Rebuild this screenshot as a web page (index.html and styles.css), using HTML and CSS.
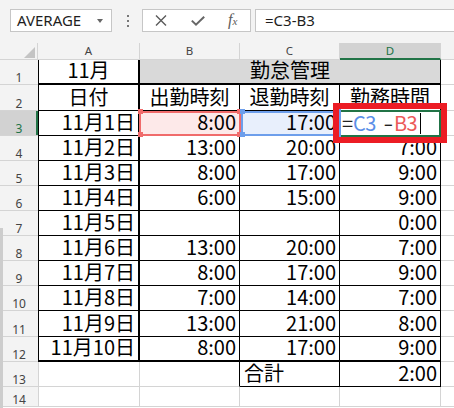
FILE: index.html
```html
<!DOCTYPE html>
<html lang="ja">
<head>
<meta charset="utf-8">
<title>勤怠管理</title>
<link rel="stylesheet" href="styles.css">
</head>
<body>
<div class="app">
  <div class="fbar">
    <div class="namebox"><span class="nbtxt">AVERAGE</span><span class="dd"></span></div>
    <div class="dots"><i></i><i></i><i></i></div>
    <div class="btns">
      <svg class="ico-x" width="12" height="11" viewBox="0 0 12 11"><path d="M1 0.5 L11 10.5 M11 0.5 L1 10.5" stroke="#5a5a5a" stroke-width="1.4" fill="none"/></svg>
      <svg class="ico-ok" width="14" height="10" viewBox="0 0 14 10"><path d="M0.8 4.6 L5 8.6 L13.2 0.8" stroke="#666" stroke-width="2" fill="none"/></svg>
      <span class="fx">f<span class="fxx">x</span></span>
    </div>
    <div class="formula">=C3-B3</div>
  </div>

  <div class="sheet">
    <!-- header -->
    <div class="corner"><span class="tri"></span></div>
    <div class="ch">A</div>
    <div class="ch">B</div>
    <div class="ch">C</div>
    <div class="ch sel">D</div>
    <div class="ch last"></div>

    <!-- row 1 -->
    <div class="rh">1</div>
    <div class="c m ta tt">11月</div>
    <div class="c m k tt title">勤怠管理</div>
    <div class="c e"></div>

    <!-- row 2 -->
    <div class="rh">2</div>
    <div class="c m ta k">日付</div>
    <div class="c m k">出勤時刻</div>
    <div class="c m k">退勤時刻</div>
    <div class="c m k">勤務時間</div>
    <div class="c e"></div>

    <!-- row 3 -->
    <div class="rh sel">3</div>
    <div class="c r ta k">11月1日</div>
    <div class="c r k pink">8:00<span class="sel-box red"><i class="h tl"></i><i class="h tr"></i><i class="h bl"></i><i class="h br"></i></span></div>
    <div class="c r k blue-bg">17:00<span class="sel-box blue"><i class="h tl"></i><i class="h tr"></i><i class="h bl"></i><i class="h br"></i></span></div>
    <div class="c k">
      <div class="editor"><span class="eq">=</span><span class="rb">C3</span><span class="op">-</span><span class="rr">B3</span><span class="caret"></span></div>
      <span class="anno"></span>
    </div>
    <div class="c e"></div>

    <!-- row 4 -->
    <div class="rh">4</div>
    <div class="c r ta k">11月2日</div>
    <div class="c r k">13:00</div>
    <div class="c r k">20:00</div>
    <div class="c r k">7:00</div>
    <div class="c e"></div>

    <!-- row 5 -->
    <div class="rh">5</div>
    <div class="c r ta k">11月3日</div>
    <div class="c r k">8:00</div>
    <div class="c r k">17:00</div>
    <div class="c r k">9:00</div>
    <div class="c e"></div>

    <!-- row 6 -->
    <div class="rh">6</div>
    <div class="c r ta k">11月4日</div>
    <div class="c r k">6:00</div>
    <div class="c r k">15:00</div>
    <div class="c r k">9:00</div>
    <div class="c e"></div>

    <!-- row 7 -->
    <div class="rh">7</div>
    <div class="c r ta k">11月5日</div>
    <div class="c r k"></div>
    <div class="c r k"></div>
    <div class="c r k">0:00</div>
    <div class="c e"></div>

    <!-- row 8 -->
    <div class="rh">8</div>
    <div class="c r ta k">11月6日</div>
    <div class="c r k">13:00</div>
    <div class="c r k">20:00</div>
    <div class="c r k">7:00</div>
    <div class="c e"></div>

    <!-- row 9 -->
    <div class="rh">9</div>
    <div class="c r ta k">11月7日</div>
    <div class="c r k">8:00</div>
    <div class="c r k">17:00</div>
    <div class="c r k">9:00</div>
    <div class="c e"></div>

    <!-- row 10 -->
    <div class="rh">10</div>
    <div class="c r ta k">11月8日</div>
    <div class="c r k">7:00</div>
    <div class="c r k">14:00</div>
    <div class="c r k">7:00</div>
    <div class="c e"></div>

    <!-- row 11 -->
    <div class="rh">11</div>
    <div class="c r ta k">11月9日</div>
    <div class="c r k">13:00</div>
    <div class="c r k">21:00</div>
    <div class="c r k">8:00</div>
    <div class="c e"></div>

    <!-- row 12 -->
    <div class="rh">12</div>
    <div class="c r ta k tb">11月10日</div>
    <div class="c r k tb">8:00</div>
    <div class="c r k tb">17:00</div>
    <div class="c r k tb">9:00</div>
    <div class="c e"></div>

    <!-- row 13 -->
    <div class="rh">13</div>
    <div class="c ga"></div>
    <div class="c kr"></div>
    <div class="c k l">合計</div>
    <div class="c r k">2:00</div>
    <div class="c e"></div>

    <!-- row 14 -->
    <div class="rh">14</div>
    <div class="c ga"></div>
    <div class="c"></div>
    <div class="c"></div>
    <div class="c"></div>
    <div class="c e"></div>
  </div>
</div>
</body>
</html>
```
FILE: styles.css
```css
* { box-sizing: border-box; }

html, body {
  margin: 0;
  padding: 0;
}

body {
  width: 454px;
  height: 408px;
  overflow: hidden;
  background: #f3f3f3;
  font-family: "Noto Sans", "Liberation Sans", sans-serif;
}

.app {
  display: flex;
  flex-direction: column;
  height: 408px;
}

/* ---------- formula bar ---------- */
.fbar {
  flex: none;
  height: 43px;
  display: flex;
  align-items: flex-start;
  padding: 9px 0 0 10px;
  overflow: hidden;
}

.namebox {
  flex: none;
  width: 102px;
  height: 23px;
  background: #fff;
  border: 1px solid #c6c6c6;
  display: flex;
  align-items: center;
  padding-left: 6px;
  font-size: 15px;
  line-height: 21px;
  color: #1e1e1e;
}

.nbtxt { flex: 1; }

.dd {
  width: 0;
  height: 0;
  border-left: 3px solid transparent;
  border-right: 3px solid transparent;
  border-top: 4px solid #666;
  margin-right: 8px;
}

.dots {
  flex: none;
  width: 30px;
  height: 23px;
  display: flex;
  flex-direction: column;
  align-items: center;
  justify-content: center;
  gap: 3px;
  padding-left: 2px;
}

.dots i {
  display: block;
  width: 2px;
  height: 2px;
  background: #777;
}

.btns {
  flex: none;
  width: 109px;
  height: 23px;
  background: #fff;
  border: 1px solid #c6c6c6;
  display: flex;
  align-items: center;
  padding-left: 12px;
}

.ico-x { flex: none; }
.ico-ok { flex: none; margin-left: 24px; margin-top: 1px; }

.fx {
  margin-left: 23px;
  font-family: "Liberation Serif", serif;
  font-style: italic;
  font-size: 16px;
  line-height: 15px;
  color: #5c5c5c;
}

.fxx { font-size: 11px; }

.formula {
  flex: none;
  margin-left: 4px;
  width: 230px;
  height: 23px;
  background: #fff;
  border: 1px solid #c6c6c6;
  border-right: none;
  padding-left: 9px;
  font-size: 15px;
  line-height: 21px;
  color: #1e1e1e;
}

/* ---------- sheet ---------- */
.sheet {
  flex: 1;
  position: relative;
  background: #fff;
  display: grid;
  grid-template-columns: 38px 102px 100px 100px 101px 1fr;
  grid-template-rows: 17px 25px 26px repeat(8, 25px) 26px 25px 25px 20px 1fr;
}

.sheet::before {
  content: "";
  position: absolute;
  left: 0;
  top: 185px;
  bottom: 0;
  width: 3px;
  background: #cdcdcd;
  z-index: 5;
}

.corner {
  background: #f3f3f3;
  border-bottom: 1px solid #d4d4d4;
  border-right: 1px solid #d4d4d4;
  position: relative;
}

.tri {
  position: absolute;
  right: 2px;
  bottom: 1px;
  width: 0;
  height: 0;
  border-left: 11px solid transparent;
  border-bottom: 11px solid #c4c4c4;
}

.ch {
  background: #f3f3f3;
  border-right: 1px solid #d4d4d4;
  border-bottom: 1px solid #d4d4d4;
  display: flex;
  align-items: center;
  justify-content: center;
  font-size: 11.5px;
  line-height: 16px;
  color: #444;
}

.ch.sel {
  background: #d2d2d2;
  border-bottom: 2px solid #217346;
  color: #217346;
}

.ch.last { border-right: none; }

.rh {
  background: #f3f3f3;
  border-bottom: 1px solid #d4d4d4;
  display: flex;
  align-items: flex-end;
  justify-content: center;
  font-size: 12px;
  line-height: 12px;
  color: #444;
  padding-bottom: 0;
}

.rh.sel {
  background: #d2d2d2;
  color: #217346;
  box-shadow: inset -2px 0 0 #217346;
}

/* cells */
.c {
  position: relative;
  border-right: 1px solid #d4d4d4;
  border-bottom: 1px solid #d4d4d4;
  display: flex;
  align-items: flex-end;
  padding: 0 3px 3px 3px;
  font-family: "Noto Sans CJK JP", "Noto Sans", sans-serif;
  font-size: 20px;
  line-height: 20px;
  color: #000;
  white-space: nowrap;
}

.r { justify-content: flex-end; }
.m { justify-content: center; }
.l { justify-content: flex-start; padding-left: 4px; }

.k {
  border-right-color: #000;
  border-bottom-color: #000;
}

.kr { border-right-color: #000; }

.ta {
  border-left: 1px solid #000;
  border-right: 2px solid #000;
  border-bottom-color: #000;
}

.ga { border-left: 1px solid #d4d4d4; }

.tt { border-bottom: 2px solid #000; }
.tb { border-bottom: 2px solid #000; }

.title {
  grid-column: span 3;
  background: #d9d9d9;
}

.e { border-right: none; }

/* selections */
.pink { background: #fde9e9; }
.blue-bg { background: #e8effc; }

.sel-box {
  position: absolute;
  top: 0;
  bottom: -1px;
  border: 2px solid;
  pointer-events: none;
}

.sel-box.red { left: -1px; right: -2px; border-color: #f06b6b; z-index: 1; }
.sel-box.blue { left: 1px; right: -2px; border-color: #6d9eeb; z-index: 3; }

.h {
  position: absolute;
  width: 5px;
  height: 5px;
}

.red .h { background: #f06b6b; }
.blue .h { background: #6d9eeb; }

.tl { left: -3px; top: -4px; }
.tr { right: -3px; top: -4px; }
.bl { left: -3px; bottom: -3px; }
.br { right: -3px; bottom: -3px; }

.blue .tr, .blue .br { right: -2px; }

.editor {
  position: absolute;
  left: -2px;
  top: -1px;
  right: -1px;
  bottom: -2px;
  border: 2px solid #217346;
  background: #fff;
  display: flex;
  align-items: flex-end;
  padding: 0 0 2px 2px;
  z-index: 2;
}

.eq { color: #222; }
.rb { color: #5b8fe8; margin-left: 0; letter-spacing: -0.5px; }
.op { color: #222; margin: 0 2px 0 9px; transform: scaleX(1.4); }
.rr { color: #ec5a5a; letter-spacing: -0.5px; }

.caret {
  display: block;
  width: 1px;
  height: 21px;
  background: #000;
  margin-left: 3px;
  margin-bottom: -1px;
}

.anno {
  position: absolute;
  left: -7px;
  top: -8px;
  width: 114px;
  height: 40px;
  border: 6px solid #ec1c24;
  z-index: 4;
}
```
